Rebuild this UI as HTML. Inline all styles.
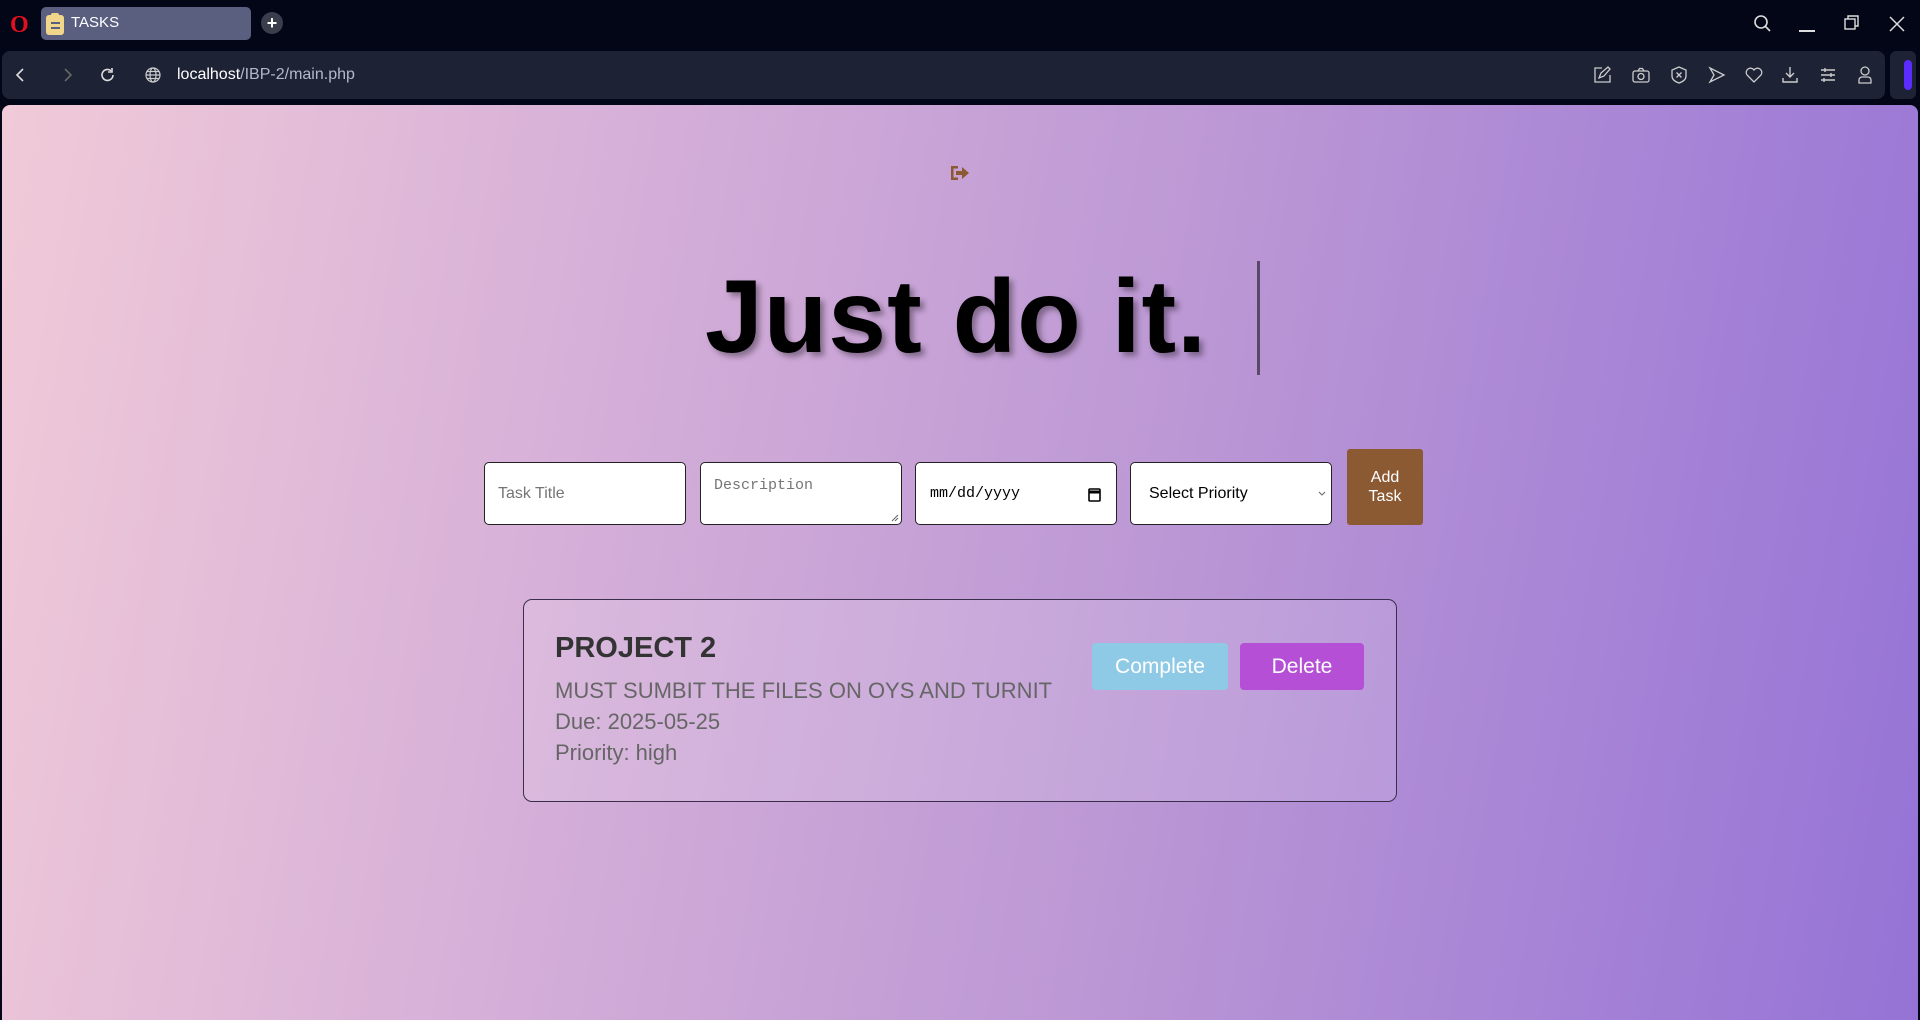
<!DOCTYPE html>
<html><head><meta charset="utf-8"><style>
*{margin:0;padding:0;box-sizing:border-box}
body{width:1920px;height:1020px;background:#030616;position:relative;overflow:hidden;font-family:"Liberation Sans",Arial,sans-serif}
.abs{position:absolute}
svg{position:absolute;overflow:visible}
.page{left:2px;top:105px;width:1916px;height:915px;border-radius:8px 8px 0 0;background:linear-gradient(100deg,#f1cad8 0%,#d6b0d8 30%,#bb97d5 60%,#9573d6 100%)}
.fld{position:absolute;top:462px;height:63px;width:202px;border:1.5px solid #222;border-radius:5px;background:#fff;font-size:16px;padding:0 13px;display:flex;align-items:center}
</style></head><body>
<div class="abs" style="left:10px;top:12px;color:#e0101e;font:bold 24px 'Liberation Serif',serif;">O</div>
<div class="abs" style="left:41px;top:7px;width:210px;height:33px;background:#5a5f80;border-radius:5px"></div>
<div class="abs" style="left:46px;top:15px;width:18px;height:20px;background:#f0d68a;border-radius:3px"></div>
<div class="abs" style="left:51px;top:13px;width:8px;height:4px;background:#f0d68a;border-radius:2px"></div>
<div class="abs" style="left:51px;top:22px;width:9px;height:1.5px;background:#5a5f80"></div>
<div class="abs" style="left:51px;top:27px;width:9px;height:1.5px;background:#5a5f80"></div>
<div class="abs" style="left:71px;top:14px;color:#fff;font-size:15px">TASKS</div>
<div class="abs" style="left:261px;top:12px;width:22px;height:22px;border-radius:50%;background:#3a3d4c;color:#fff;font:bold 18px/22px sans-serif;text-align:center">+</div>
<svg style="left:1753px;top:14px" width="20" height="20" fill="none" stroke="#ddd" stroke-width="1.6"><circle cx="8" cy="8" r="6"/><path d="M12 12l5 5"/></svg>
<div class="abs" style="left:1799px;top:30px;width:16px;height:1.5px;background:#ddd"></div>
<svg style="left:1844px;top:15px" width="16" height="16" fill="none" stroke="#ddd" stroke-width="1.4"><rect x="1" y="4" width="10" height="10"/><path d="M4 4V1h10v10h-3"/></svg>
<svg style="left:1889px;top:16px" width="16" height="16" fill="none" stroke="#ddd" stroke-width="1.5"><path d="M1 1l14 14M15 1L1 15"/></svg>
<div class="abs" style="left:2px;top:51px;width:1883px;height:48px;background:#1e2235;border-radius:8px"></div>
<div class="abs" style="left:1890px;top:51px;width:26px;height:48px;background:#1e2235;border-radius:6px"></div>
<div class="abs" style="left:1904px;top:60px;width:8px;height:30px;background:#5a2cff;border-radius:4px"></div>
<svg style="left:16px;top:68px" width="10" height="14" fill="none" stroke="#ddd" stroke-width="1.6"><path d="M7 1L1 7l6 6"/></svg>
<svg style="left:63px;top:68px" width="10" height="14" fill="none" stroke="#666" stroke-width="1.6"><path d="M2 1l6 6-6 6"/></svg>
<svg style="left:100px;top:67px" width="16" height="16" fill="none" stroke="#ddd" stroke-width="1.6"><path d="M13 8a5.5 5.5 0 1 1-2-4.3"/><path d="M12 1v4H8"/></svg>
<svg style="left:145px;top:67px" width="16" height="16" fill="none" stroke="#ccc" stroke-width="1.2"><circle cx="8" cy="8" r="7"/><ellipse cx="8" cy="8" rx="3" ry="7"/><path d="M1 8h14M2 4.5h12M2 11.5h12"/></svg>
<div class="abs" style="left:177px;top:66px;font-size:16px;color:#fff">localhost<span style="color:#b5b8c8">/IBP-2/main.php</span></div>
<svg style="left:1594px;top:66px" width="18" height="18" fill="none" stroke="#ccc" stroke-width="1.3"><path d="M16 9v7H1V2h7"/><path d="M5 12l2-5 7-6 2 2-6 7z"/></svg>
<svg style="left:1632px;top:67px" width="18" height="16" fill="none" stroke="#ccc" stroke-width="1.3"><rect x="1" y="4" width="16" height="11" rx="2"/><circle cx="9" cy="9.5" r="3"/><path d="M6 4l1.5-2.5h3L12 4"/></svg>
<svg style="left:1671px;top:66px" width="16" height="18" fill="none" stroke="#ccc" stroke-width="1.3"><path d="M8 1l7 3v6c0 4-4 6-7 7-3-1-7-3-7-7V4z"/><path d="M5.5 6.5l5 5M10.5 6.5l-5 5"/></svg>
<svg style="left:1709px;top:67px" width="16" height="16" fill="none" stroke="#ccc" stroke-width="1.3"><path d="M1 1l14 7-14 7 4-7z"/></svg>
<svg style="left:1745px;top:67px" width="18" height="16" fill="none" stroke="#ccc" stroke-width="1.3"><path d="M9 15L2 8a4 4 0 0 1 7-5 4 4 0 0 1 7 5z"/></svg>
<svg style="left:1782px;top:66px" width="16" height="18" fill="none" stroke="#ccc" stroke-width="1.4"><path d="M8 1v10M4 7l4 4 4-4M1 12v4h14v-4"/></svg>
<svg style="left:1820px;top:67px" width="16" height="16" fill="none" stroke="#ccc" stroke-width="1.4"><path d="M1 3h14M1 8h14M1 13h14M5 1v4M11 6v4M4 11v4"/></svg>
<svg style="left:1858px;top:66px" width="14" height="18" fill="none" stroke="#ccc" stroke-width="1.3"><circle cx="7" cy="5" r="4"/><path d="M1 17v-3a3 3 0 0 1 3-3h6a3 3 0 0 1 3 3v3z"/></svg>
<div class="abs page"></div>
<svg style="left:950px;top:164px" width="20" height="18" fill="#8b5a30"><path d="M1 2h7v2.5H3.5v9H8V16H1z"/><path d="M6 7h6V3l7 6-7 6v-4H6z"/></svg>
<div class="abs" style="left:556px;top:252px;width:800px;text-align:center;white-space:nowrap;font-weight:bold;font-size:104px;line-height:130px;letter-spacing:1px;color:#000;text-shadow:4px 4px 6px rgba(0,0,0,0.35)">Just do it.</div>
<div class="abs" style="left:1257px;top:261px;width:3px;height:114px;background:#5a4868"></div>
<div class="fld" style="left:484px;color:#757575">Task Title</div>
<div class="fld" style="left:700px;color:#757575;align-items:flex-start;padding-top:14px;font-family:'Liberation Mono',monospace;font-size:15px">Description<svg style="right:2px;bottom:2px" width="8" height="8" stroke="#666" stroke-width="1"><path d="M7 1L1 7M7 4L4 7"/></svg></div>
<div class="fld" style="left:915px;color:#000;font-family:'Liberation Mono',monospace;font-size:15px;padding-left:14px">mm/dd/yyyy<svg style="left:172px;top:24px" width="13" height="15" fill="none" stroke="#000" stroke-width="1.6"><rect x="1" y="2" width="11" height="12" rx="1"/><path d="M1 5h11" stroke-width="3"/></svg></div>
<div class="fld" style="left:1130px;color:#000;font-size:16px;padding-left:18px">Select Priority<svg style="left:187px;top:28px" width="8" height="6" fill="none" stroke="#666" stroke-width="1"><path d="M1 1l3 3 3-3"/></svg></div>
<div class="abs" style="left:1347px;top:449px;width:76px;height:76px;background:#8b5a33;border-radius:3px;color:#fff;font-size:16px;text-align:center;padding-top:19px;line-height:19px">Add<br>Task</div>
<div class="abs" style="left:523px;top:599px;width:874px;height:203px;border:1px solid #3a2f4a;border-radius:9px;background:rgba(255,255,255,0.13)"></div>
<div class="abs" style="left:555px;top:632px;font-size:29px;font-weight:bold;color:#333">PROJECT 2</div>
<div class="abs" style="left:555px;top:675px;font-size:22px;color:#666;line-height:31px">MUST SUMBIT THE FILES ON OYS AND TURNIT<br>Due: 2025-05-25<br>Priority: high</div>
<div class="abs" style="left:1092px;top:643px;width:136px;height:47px;background:#8ecae6;border-radius:4px;color:#fff;font-size:21px;text-align:center;line-height:48px">Complete</div>
<div class="abs" style="left:1240px;top:643px;width:124px;height:47px;background:#b44fd6;border-radius:4px;color:#fff;font-size:21px;text-align:center;line-height:48px">Delete</div>
</body></html>
